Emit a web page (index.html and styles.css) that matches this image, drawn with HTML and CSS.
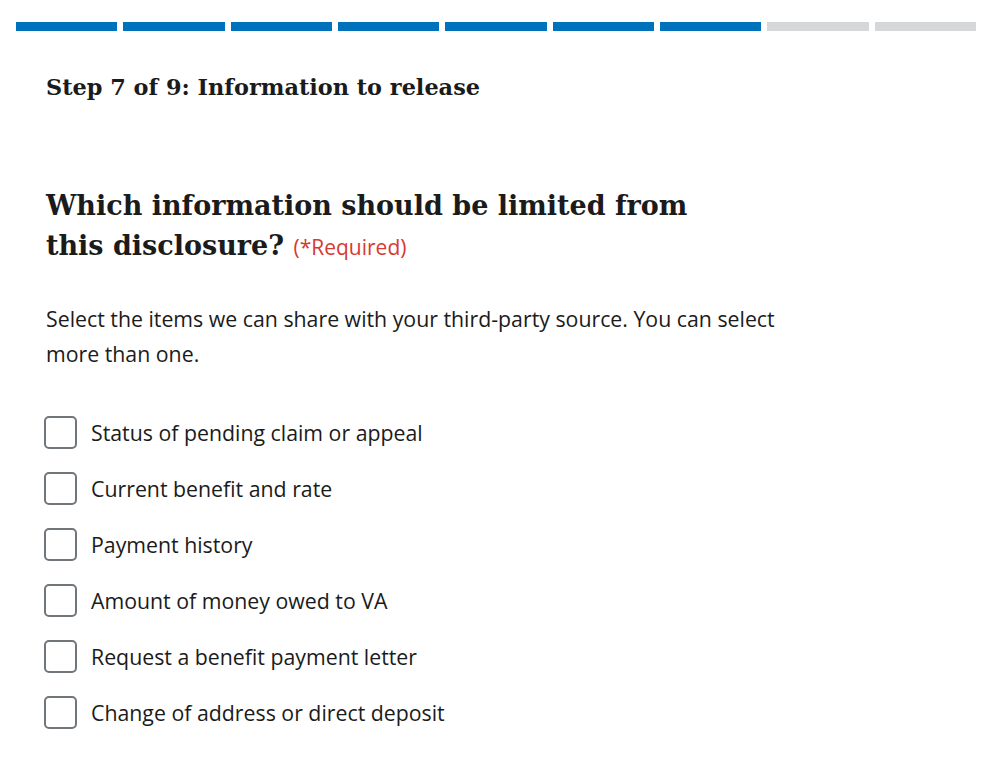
FILE: index.html
```html
<!DOCTYPE html>
<html lang="en">
<head>
<meta charset="utf-8">
<title>Step 7 of 9: Information to release</title>
<link rel="stylesheet" href="styles.css">
</head>
<body>
<div class="page">
  <div class="progress" aria-label="Step 7 of 9">
    <span class="seg done"></span>
    <span class="seg done"></span>
    <span class="seg done"></span>
    <span class="seg done"></span>
    <span class="seg done"></span>
    <span class="seg done"></span>
    <span class="seg done"></span>
    <span class="seg"></span>
    <span class="seg"></span>
  </div>
  <div class="content">
    <h2 class="step-title">Step 7 of 9: Information to release</h2>
    <fieldset class="fieldset">
      <legend class="legend"><span class="legend-text">Which information should be limited from this disclosure?</span> <span class="required">(*Required)</span></legend>
      <p class="hint">Select the items we can share with your third-party source. You can select more than one.</p>
      <ul class="options">
        <li class="option"><span class="box"></span><span class="label">Status of pending claim or appeal</span></li>
        <li class="option"><span class="box"></span><span class="label">Current benefit and rate</span></li>
        <li class="option"><span class="box"></span><span class="label">Payment history</span></li>
        <li class="option"><span class="box"></span><span class="label">Amount of money owed to VA</span></li>
        <li class="option"><span class="box"></span><span class="label">Request a benefit payment letter</span></li>
        <li class="option"><span class="box"></span><span class="label">Change of address or direct deposit</span></li>
      </ul>
    </fieldset>
  </div>
</div>
</body>
</html>
```
FILE: styles.css
```css
* { box-sizing: border-box; }
html, body { margin: 0; padding: 0; background: #ffffff; }
body {
  font-family: "Open Sans", "Noto Sans", sans-serif;
  color: #1b1b1b;
}
.page {
  padding: 22px 8px 0 16px;
}
.progress {
  display: flex;
  gap: 6px;
  height: 9px;
}
.seg {
  flex: 1 1 0;
  background: #d6d7d9;
}
.seg.done { background: #0071bb; }
.content {
  padding-left: 30px;
}
.step-title {
  font-family: "DejaVu Serif", serif;
  font-weight: bold;
  font-size: 22.4px;
  line-height: 28px;
  margin: 42px 0 0 0;
  color: #1b1b1b;
}
.fieldset {
  border: 0;
  margin: 85px 0 0 0;
  padding: 0;
  min-width: 0;
}
.legend {
  padding: 0;
  max-width: 690px;
  font-family: "DejaVu Serif", serif;
  font-weight: bold;
  font-size: 27px;
  line-height: 40px;
  color: #1b1b1b;
}
.required {
  font-family: "Open Sans", sans-serif;
  font-weight: normal;
  font-size: 21px;
  line-height: 24px;
  color: #d83933;
}
.hint {
  margin: 35px 0 0 0;
  max-width: 760px;
  font-size: 21.3px;
  line-height: 35px;
}
.options {
  list-style: none;
  margin: 45px 0 0 0;
  padding: 0;
  display: flex;
  flex-direction: column;
  gap: 23px;
}
.option {
  display: flex;
  align-items: center;
  gap: 14px;
  height: 33px;
}
.box {
  width: 33px;
  height: 33px;
  margin-left: -2px;
  border: 2px solid #71767a;
  border-radius: 5px;
  background: #fff;
  flex: none;
}
.label {
  font-size: 21.3px;
  line-height: 28px;
}
```
